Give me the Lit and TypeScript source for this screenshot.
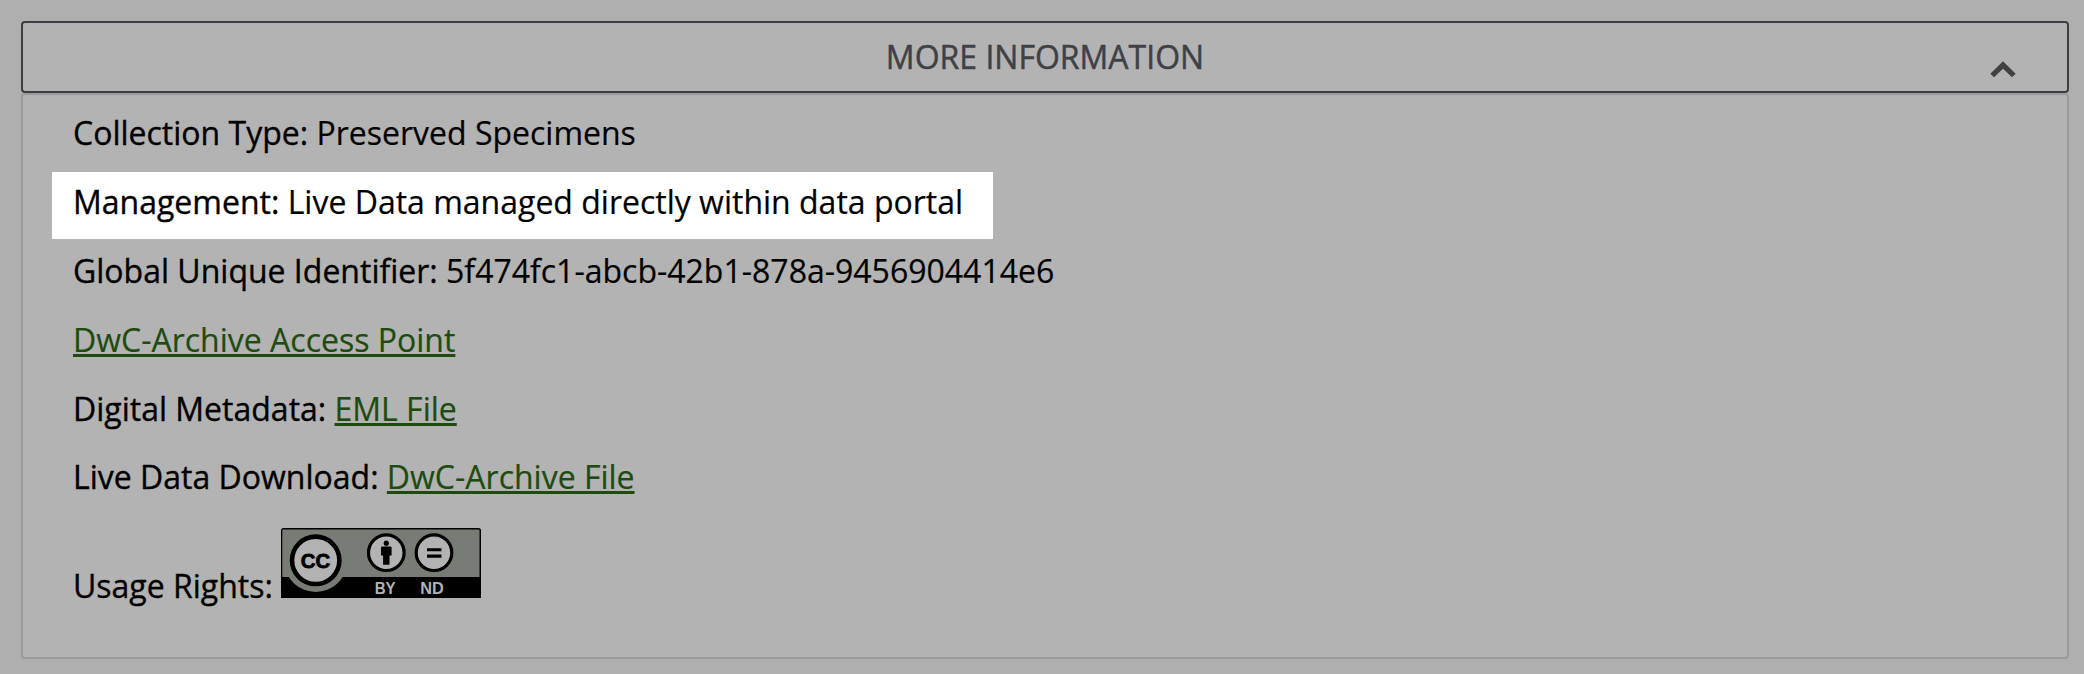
import { LitElement, html, css, svg } from "lit";
import { customElement } from "lit/decorators.js";

@customElement("license-badge")
class LicenseBadge extends LitElement {
  static styles = css`
    :host { display: inline-block; width: 200px; height: 70px; -webkit-text-stroke: 0; }
    svg { display: block; }
    .cc { font: 700 21px "Liberation Sans", sans-serif; stroke: #000; stroke-width: 0.8px; }
    .term { font: 700 16px "Liberation Sans", sans-serif; fill: #b3b3b3; }
  `;

  private ring(cx: number) {
    return svg`<circle cx=${cx} cy="24.7" r="17.8" fill="#b3b3b3" stroke="#000" stroke-width="3.2"></circle>`;
  }

  render() {
    return html`<svg width="200" height="70" viewBox="0 0 200 70">
      <path d="M0 70V2.5Q0 0 2.5 0H197.500Q200 0 200 2.500V70Z" fill="#000" />
      <path d="M1.300 49V2.500Q1.300 1.600 2.500 1.600H197.500Q198.500 1.600 198.500 2.500V49Z" fill="#777c75" />
      <path d="M7.500 48.500A31.700 31.700 0 0 0 61.900 48.500Z" fill="#777c75" />
      <circle cx="34.700" cy="32.300" r="23.700" fill="#b3b3b3" stroke="#000" stroke-width="4.600" />
      <text class="cc" x="19.700" y="40.100" textLength="29.500" lengthAdjust="spacingAndGlyphs">CC</text>
      ${this.ring(105.3)}
      <circle cx="105.300" cy="15.200" r="2.600" />
      <path d="M101.300 18.400H109.300Q110.600 18.400 110.600 19.700V27.400H108.500V36.700H102.100V27.400H100V19.700Q100 18.400 101.300 18.400Z" />
      ${this.ring(153)}
      <path d="M146 20.200H160.500V23.300H146ZM146 26.600H160.500V29.700H146Z" />
      <text class="term" x="93.700" y="66" textLength="21" lengthAdjust="spacingAndGlyphs">BY</text>
      <text class="term" x="139.300" y="66" textLength="23.500" lengthAdjust="spacingAndGlyphs">ND</text>
    </svg>`;
  }
}

@customElement("app-root")
class AppRoot extends LitElement {
  static styles = css`
    :host {
      display: block;
      box-sizing: border-box;
      height: 674px;
      padding: 21px 15px 0 21px;
      background: #afafaf;
      color: #000;
      font: 400 32px/43px "Open Sans", sans-serif;
      -webkit-text-stroke: 0.2px currentColor;
    }
    .header {
      box-sizing: border-box;
      display: grid;
      grid-template-columns: 1fr auto 1fr;
      align-items: start;
      height: 72px;
      padding: 12px 50px 0;
      border: 2px solid #3c3e43;
      border-radius: 4px;
      background: #b3b3b3;
      color: #3f4145;
    }
    .title { grid-column: 2; white-space: nowrap; -webkit-text-stroke: 0.45px currentColor; }
    .chevron { justify-self: end; margin: 26px 1px 0 0; }
    .panel {
      box-sizing: border-box;
      height: 566px;
      padding: 8.15px 29px 0;
      border: 2px solid #999a99;
      border-radius: 4px;
      background: #b3b3b3;
    }
    .row {
      box-sizing: border-box;
      width: max-content;
      height: 67px;
      margin-bottom: 1.85px;
      padding: 8px 31px 0 21px;
      white-space: nowrap;
    }
    .label { -webkit-text-stroke: 0.35px currentColor; }
    .active { width: 941px; background: #fff; }
    .rights { height: auto; padding-top: 11.75px; }
    .link { color: #204b10; text-decoration: underline; }
  `;

  render() {
    return html`
      <div class="header">
        <span class="title">MORE INFORMATION</span>
        <svg class="chevron" width="26" height="17" viewBox="0 0 26 17">
          <path d="M13 0.300L25.700 12.700L22 16.300L13 7.700L4 16.300L0.300 12.700Z" fill="#3f4145" />
        </svg>
      </div>
      <div class="panel">
        <div class="row"><span class="label">Collection Type:</span> Preserved Specimens</div>
        <div class="row active"><span class="label">Management:</span> Live Data managed directly within data portal</div>
        <div class="row"><span class="label">Global Unique Identifier:</span> 5f474fc1-abcb-42b1-878a-9456904414e6</div>
        <div class="row"><a class="link">DwC-Archive Access Point</a></div>
        <div class="row"><span class="label">Digital Metadata:</span> <a class="link">EML File</a></div>
        <div class="row"><span class="label">Live Data Download:</span> <a class="link">DwC-Archive File</a></div>
        <div class="row rights"><span class="label">Usage Rights:</span> <license-badge></license-badge></div>
      </div>
    `;
  }
}
